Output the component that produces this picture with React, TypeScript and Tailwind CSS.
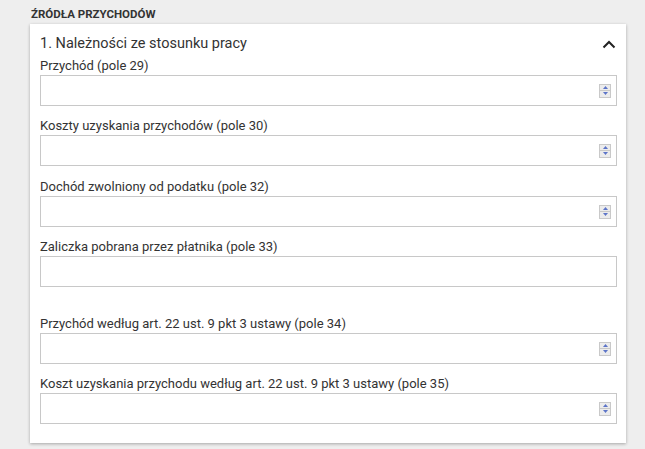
import React from "react";

// ─── Spinner (number input arrows) ────────────────────────────────────────────

function Spinner() {
  return (
    <div className="flex flex-col w-[12px] h-[14px] border border-[#c9c9c9] bg-[#ececec]">
      <div className="flex-1 flex items-center justify-center border-b border-[#c9c9c9]">
        <svg width="5" height="3" viewBox="0 0 5 3">
          <polygon points="0,3 5,3 2.5,0" fill="#5d75c8" />
        </svg>
      </div>
      <div className="flex-1 flex items-center justify-center">
        <svg width="5" height="3" viewBox="0 0 5 3">
          <polygon points="0,0 5,0 2.5,3" fill="#5d75c8" />
        </svg>
      </div>
    </div>
  );
}

// ─── Field ────────────────────────────────────────────────────────────────────

function Field({ label, spinner = true, className = "" }: { label: string; spinner?: boolean; className?: string }) {
  return (
    <div className={className}>
      <p className="text-[13px] leading-[15px] text-[#333]">{label}</p>
      <div className="mt-[2px] h-[31px] border border-[#c8c8c8] bg-white flex items-center justify-end pr-[5px]">
        {spinner && <Spinner />}
      </div>
    </div>
  );
}

// ─── App ──────────────────────────────────────────────────────────────────────

export default function App() {
  return (
    <div
      className="min-h-[449px] bg-[#eeeeee] pl-[30px] pr-[19px] pt-[6px] pb-[6px]"
      style={{ fontFamily: "Roboto, 'Liberation Sans', sans-serif" }}
    >
      <h2 className="pl-[1px] text-[11.5px] leading-[16px] font-bold text-[#333] uppercase">
        Źródła przychodów
      </h2>

      <div className="mt-[2px] bg-white shadow-[0_1px_3px_rgba(0,0,0,0.3)] pl-[10px] pr-[9px] pt-[10px] pb-[19px]">
        <div className="flex items-center justify-between">
          <h3 className="text-[14.5px] leading-[20px] text-[#333]">1. Należności ze stosunku pracy</h3>
          <svg width="14" height="9" viewBox="0 0 14 9" className="mr-[1px]">
            <polyline points="1.5,7.5 7,2 12.5,7.5" fill="none" stroke="#222" strokeWidth="2" />
          </svg>
        </div>

        <Field className="mt-[4px]" label="Przychód (pole 29)" />
        <Field className="mt-[12px]" label="Koszty uzyskania przychodów (pole 30)" />
        <Field className="mt-[13px]" label="Dochód zwolniony od podatku (pole 32)" />
        <Field className="mt-[12px]" label="Zaliczka pobrana przez płatnika (pole 33)" spinner={false} />
        <Field className="mt-[29px]" label="Przychód według art. 22 ust. 9 pkt 3 ustawy (pole 34)" />
        <Field className="mt-[12px]" label="Koszt uzyskania przychodu według art. 22 ust. 9 pkt 3 ustawy (pole 35)" />
      </div>
    </div>
  );
}
